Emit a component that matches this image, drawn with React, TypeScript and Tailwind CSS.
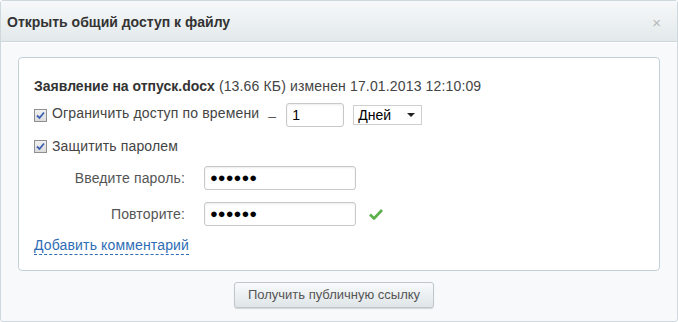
import React from "react";

function Check() {
  return (
    <span className="inline-flex shrink-0 h-[13px] w-[13px] items-center justify-center border border-[#8f8f8f] bg-gradient-to-b from-[#f0f0f0] to-[#dcdcdc]">
      <svg width="9" height="9" viewBox="0 0 9 9">
        <path d="M1 4.5 L3.5 7 L8 1.5" fill="none" stroke="#3b5fb0" strokeWidth="1.8" />
      </svg>
    </span>
  );
}

export default function App() {
  return (
    <div
      className="w-[678px] h-[322px] overflow-hidden"
      style={{ fontFamily: '"Liberation Sans", Arial, sans-serif' }}
    >
      <div className="h-[322px] flex flex-col rounded-[3px] border border-[#cfd8dc] bg-[#f7f9fa]">
        <div className="h-[41px] shrink-0 flex items-center justify-between pl-[6px] pr-[16px] pt-[2px] bg-gradient-to-b from-[#f6f8f9] to-[#e3e9eb] border-b border-[#cdd7db] shadow-[0_1px_0_#ffffff]">
          <span className="text-[14px] font-bold text-[#333]">Открыть общий доступ к файлу</span>
          <span className="text-[15px] text-[#b5b9bc] leading-none">×</span>
        </div>
        <div className="px-[17px] pt-[15px]">
          <div className="h-[214px] rounded-[4px] border border-[#c3d0d7] bg-white pl-[15px] pt-[20px] text-[14px] tracking-[0.15px] text-[#444]">
            <div className="leading-[16px]">
              <span className="font-bold text-[#333] tracking-[0px]">Заявление на отпуск.docx</span>{" "}
              <span>(13.66 КБ) изменен 17.01.2013 12:10:09</span>
            </div>
            <div className="mt-[9px] flex items-center h-[24px]">
              <Check />
              <span className="ml-[5px] -mt-[3px]">Ограничить доступ по времени</span>
              <span className="ml-[9px] mt-[2px] text-[#555]">–</span>
              <div className="ml-[10px] h-[24px] w-[58px] rounded-[3px] border border-[#c8c8c8] shadow-[inset_0_1px_2px_rgba(0,0,0,0.08)] flex items-center pl-[5px] text-[14px] text-black">
                1
              </div>
              <div className="ml-[9px] h-[20px] w-[69px] border border-[#cfcfcf] flex items-center justify-between pl-[4px] pr-[6px] text-[14px] tracking-[0px] text-black">
                <span>Дней</span>
                <svg width="8" height="4" viewBox="0 0 8 4">
                  <path d="M0 0 L8 0 L4 4 Z" fill="#222" />
                </svg>
              </div>
            </div>
            <div className="mt-[11px] flex items-center h-[16px]">
              <Check />
              <span className="ml-[5px]">Защитить паролем</span>
            </div>
            <div className="mt-[12px] flex items-center h-[24px]">
              <span className="w-[151px] text-right text-[#555]">Введите пароль:</span>
              <div className="ml-[19px] h-[24px] w-[152px] rounded-[3px] border border-[#c8c8c8] shadow-[inset_0_1px_2px_rgba(0,0,0,0.08)] flex items-center pl-[5px] text-[13px] tracking-[0px] text-black">
                ●●●●●●
              </div>
            </div>
            <div className="mt-[12px] flex items-center h-[24px]">
              <span className="w-[151px] text-right text-[#555]">Повторите:</span>
              <div className="ml-[19px] h-[24px] w-[152px] rounded-[3px] border border-[#c8c8c8] shadow-[inset_0_1px_2px_rgba(0,0,0,0.08)] flex items-center pl-[5px] text-[13px] tracking-[0px] text-black">
                ●●●●●●
              </div>
              <svg className="ml-[13px]" width="14" height="12" viewBox="0 0 14 12">
                <path d="M1 6.5 L5 10.5 L13 2" fill="none" stroke="#5bb04a" strokeWidth="2.6" strokeLinejoin="round" />
              </svg>
            </div>
            <div className="mt-[11px] leading-[16px]">
              <span className="text-[#2e6db5] border-b border-dashed border-[#2e6db5] pb-[1px]">Добавить комментарий</span>
            </div>
          </div>
          <div className="flex justify-center mt-[11px]">
            <div className="ml-[-10px] h-[26px] w-[200px] rounded-[3px] border border-[#bfc7cb] bg-gradient-to-b from-[#f8fafb] to-[#dfe5e8] shadow-[0_1px_1px_rgba(0,0,0,0.15)] flex items-center justify-center text-[13px] text-[#555]">
              Получить публичную ссылку
            </div>
          </div>
        </div>
      </div>
    </div>
  );
}
